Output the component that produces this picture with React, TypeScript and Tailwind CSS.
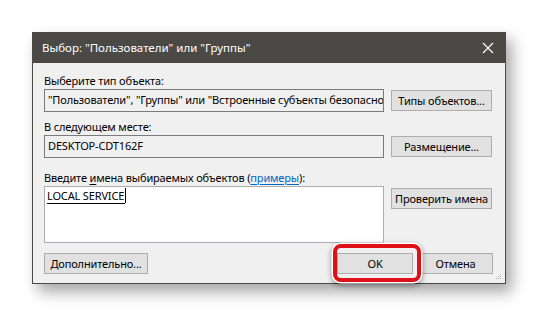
import React from "react";

const font = { fontFamily: '"Noto Sans", "Open Sans", sans-serif' };

function Btn({ children, className = "" }: { children: React.ReactNode; className?: string }) {
  return (
    <div
      className={
        "h-[21px] flex items-center justify-center border border-[#adadad] bg-[#e1e1e1] text-[11px] text-black leading-none whitespace-nowrap tracking-[-0.15px] " +
        className
      }
    >
      {children}
    </div>
  );
}

export default function App() {
  return (
    <div className="w-[538px] h-[316px] bg-white overflow-hidden" style={font}>
      <div className="ml-[32px] pt-[32px]">
        <div className="w-[474px] border border-[#4a4946] bg-[#f0f0f0] shadow-[6px_8px_14px_rgba(0,0,0,0.35)]">
          <div className="h-[30px] bg-[#4a4946] flex items-center justify-between pl-[9px] pr-[9px] text-white text-[11.5px]">
            <span>Выбор: "Пользователи" или "Группы"</span>
            <svg width="12" height="12" viewBox="0 0 12 12" className="mr-[2px]">
              <path d="M1 1 L11 11 M11 1 L1 11" stroke="#ffffff" strokeWidth="1.2" />
            </svg>
          </div>
          <div className="pl-[11px] pr-[12px] pt-[9px] pb-[3px] text-[11px] text-black tracking-[-0.15px]">
            <div className="h-[17px] leading-[17px]">Выберите тип объекта:</div>
            <div className="flex items-center gap-[7px]">
              <div className="w-[340px] h-[23px] border border-[#7a7a7a] bg-[#f0f0f0] flex items-center px-[3px] overflow-hidden whitespace-nowrap">
                "Пользователи", "Группы" или "Встроенные субъекты безопасности"
              </div>
              <Btn className="w-[101px]">Типы объектов...</Btn>
            </div>
            <div className="h-[17px] leading-[17px] mt-[6px]">В следующем месте:</div>
            <div className="flex items-center gap-[7px]">
              <div className="w-[340px] h-[23px] border border-[#7a7a7a] bg-[#f0f0f0] flex items-center px-[3px] overflow-hidden whitespace-nowrap">
                DESKTOP-CDT162F
              </div>
              <Btn className="w-[101px]">Размещение...</Btn>
            </div>
            <div className="h-[17px] leading-[17px] mt-[11px]">
              Введите <span className="underline underline-offset-2">и</span>мена выбираемых объектов (
              <span className="text-[#0066cc] underline underline-offset-2">примеры</span>):
            </div>
            <div className="flex items-start gap-[7px]">
              <div className="w-[340px] h-[57px] border border-[#abadb3] bg-white px-[2px] pt-[1px]">
                <span className="inline-block leading-[15px] border-b border-black pr-[1px]">LOCAL SERVICE</span>
                <span className="inline-block w-[1px] h-[15px] bg-black align-top" />
              </div>
              <Btn className="w-[101px] mt-[2px]">Проверить имена</Btn>
            </div>
            <div className="flex items-center mt-[10px]">
              <Btn className="w-[104px]">Дополнительно...</Btn>
              <div className="flex-1" />
              <div className="relative">
                <div className="absolute -left-[4px] -top-[9px] w-[88px] h-[38px] rounded-[8px] border-[4px] border-[#e0101a] shadow-[0_0_0_1.5px_#ffffff,0_2px_5px_2px_rgba(0,0,0,0.35)]" />
                <Btn className="w-[76px] border-[#7a7a7a]">OK</Btn>
              </div>
              <Btn className="w-[75px] ml-[5px]">Отмена</Btn>
            </div>
            <div className="flex justify-end -mr-[9px] mt-[0px] h-[6px]">
              <svg width="6" height="6" viewBox="0 0 6 6">
                <rect x="4" y="0" width="1" height="1" fill="#b0b0b0" />
                <rect x="2" y="2" width="1" height="1" fill="#b0b0b0" />
                <rect x="4" y="2" width="1" height="1" fill="#b0b0b0" />
                <rect x="0" y="4" width="1" height="1" fill="#b0b0b0" />
                <rect x="2" y="4" width="1" height="1" fill="#b0b0b0" />
                <rect x="4" y="4" width="1" height="1" fill="#b0b0b0" />
              </svg>
            </div>
          </div>
        </div>
      </div>
    </div>
  );
}
